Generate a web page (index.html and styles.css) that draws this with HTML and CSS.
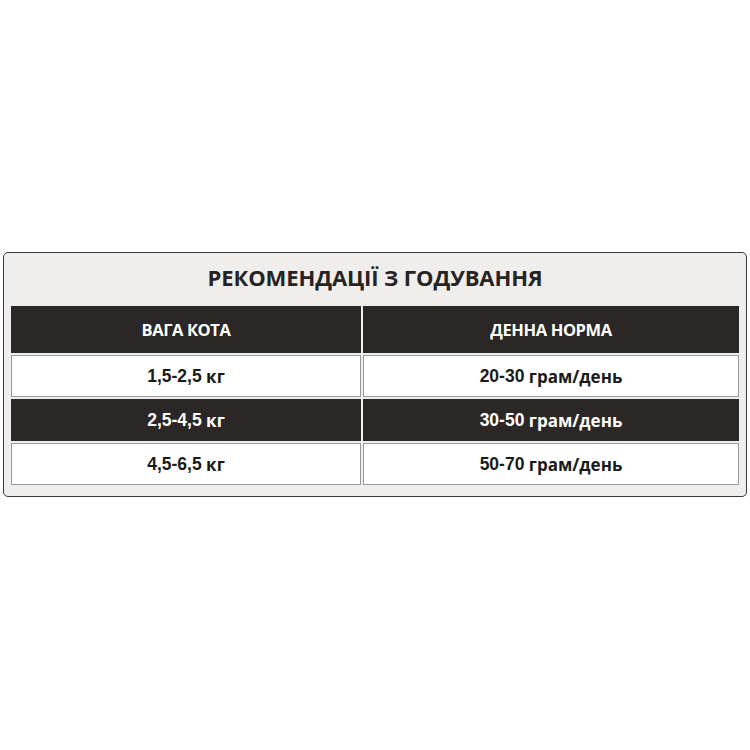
FILE: index.html
```html
<!DOCTYPE html>
<html lang="uk">
<head>
<meta charset="utf-8">
<link rel="stylesheet" href="styles.css">
</head>
<body>
<div class="card">
  <h1 class="title">РЕКОМЕНДАЦІЇ З ГОДУВАННЯ</h1>
  <div class="table">
    <div class="cell head">ВАГА КОТА</div>
    <div class="cell head">ДЕННА НОРМА</div>
    <div class="cell light"><span class="num">1,5-2,5</span>&nbsp;кг</div>
    <div class="cell light"><span class="num">20-30</span>&nbsp;грам/день</div>
    <div class="cell dark"><span class="num">2,5-4,5</span>&nbsp;кг</div>
    <div class="cell dark"><span class="num">30-50</span>&nbsp;грам/день</div>
    <div class="cell light"><span class="num">4,5-6,5</span>&nbsp;кг</div>
    <div class="cell light"><span class="num">50-70</span>&nbsp;грам/день</div>
  </div>
</div>
</body>
</html>
```
FILE: styles.css
```css
html, body {
  margin: 0;
  padding: 0;
  background: #ffffff;
}
body {
  font-family: "Open Sans", "Liberation Sans", sans-serif;
}
.card {
  box-sizing: border-box;
  margin: 252px 0 0 3px;
  width: 744px;
  height: 245px;
  background: #efeeec;
  border: 1px solid #3a3a3a;
  border-radius: 5px;
  padding: 0 7px 0 7px;
  display: flex;
  flex-direction: column;
}
.title {
  box-sizing: border-box;
  margin: 0;
  height: 53px;
  padding-bottom: 6px;
  display: flex;
  align-items: center;
  justify-content: center;
  font-size: 22px;
  font-weight: 700;
  color: #262322;
  letter-spacing: -0.1px;
}
.table {
  display: grid;
  grid-template-columns: 350px 376px;
  grid-template-rows: 47px 42px 42px 42px;
  column-gap: 2px;
  row-gap: 2px;
}
.cell {
  box-sizing: border-box;
  display: flex;
  align-items: center;
  justify-content: center;
  font-weight: 700;
  font-size: 17px;
}
.head {
  background: #2b2726;
  color: #ffffff;
  font-size: 16.5px;
  letter-spacing: -0.4px;
  border: 1px solid #2b2726;
}
.dark {
  background: #2b2726;
  color: #ffffff;
  border: 1px solid #2b2726;
}
.light {
  background: #ffffff;
  color: #1a1a1a;
  border: 1px solid #9a9a9a;
}
.num {
  font-family: "Liberation Sans", Arial, sans-serif;
  font-size: 17.5px;
}
```
